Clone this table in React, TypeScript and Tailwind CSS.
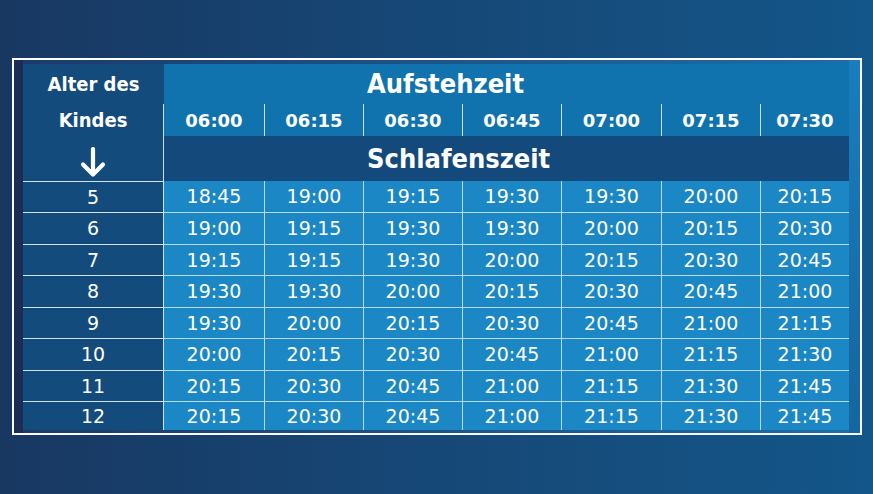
const times = ["06:00", "06:15", "06:30", "06:45", "07:00", "07:15", "07:30"];

const rows: { age: string; values: string[] }[] = [
  { age: "5", values: ["18:45", "19:00", "19:15", "19:30", "19:30", "20:00", "20:15"] },
  { age: "6", values: ["19:00", "19:15", "19:30", "19:30", "20:00", "20:15", "20:30"] },
  { age: "7", values: ["19:15", "19:15", "19:30", "20:00", "20:15", "20:30", "20:45"] },
  { age: "8", values: ["19:30", "19:30", "20:00", "20:15", "20:30", "20:45", "21:00"] },
  { age: "9", values: ["19:30", "20:00", "20:15", "20:30", "20:45", "21:00", "21:15"] },
  { age: "10", values: ["20:00", "20:15", "20:30", "20:45", "21:00", "21:15", "21:30"] },
  { age: "11", values: ["20:15", "20:30", "20:45", "21:00", "21:15", "21:30", "21:45"] },
  { age: "12", values: ["20:15", "20:30", "20:45", "21:00", "21:15", "21:30", "21:45"] },
];

function ArrowDown() {
  return (
    <svg width="26" height="31" viewBox="0 0 26 31" fill="none">
      <path d="M13 2 V27" stroke="white" strokeWidth="4.2" strokeLinecap="round" />
      <path d="M3 17.5 L13 27.5 L23 17.5" stroke="white" strokeWidth="4.2" strokeLinecap="round" strokeLinejoin="round" />
    </svg>
  );
}

export default function App() {
  const cond = "font-['DejaVu_Sans_Condensed','DejaVu_Sans',sans-serif] font-bold text-white";
  const bold = "font-['DejaVu_Sans',sans-serif] font-bold text-white";
  const data = "font-['DejaVu_Sans',sans-serif] text-[19px] text-white";

  return (
    <div className="w-[873px] h-[494px] bg-gradient-to-r from-[#183862] via-[#164877] to-[#135689] pt-[58px] pl-[12px]">
      <div className="w-[850px] h-[377px] border-2 border-white flex">
        <div className="w-[9px] bg-[#1b2d52]" />

        <div className="w-[826px] flex flex-col pt-[4px] pb-[3px] bg-gradient-to-r from-[#1b3c68] to-[#1a6ea9]">
          <div className="grid grid-cols-[141px_100px_99px_99px_99px_100px_99px_89px] grid-rows-[40px_32px_45px_31px_32px_31px_32px_31px_32px_31px_29px]">
            {/* row 1 */}
            <div className={`${cond} text-[20px] bg-[#144b7d] flex items-center justify-center`}>Alter des</div>
            <div className={`${cond} text-[27px] col-span-7 bg-[#1173ad] flex items-center pl-[203px] pt-[1px]`}>
              Aufstehzeit
            </div>

            {/* row 2 */}
            <div className={`${cond} text-[20px] bg-[#144b7d] border-r border-[#cfe1ee] flex items-center justify-center`}>
              Kindes
            </div>
            {times.map((t, i) => (
              <div
                key={t}
                className={`${bold} text-[18px] bg-[#1173ad] flex items-center justify-center ${
                  i > 0 ? "border-l border-[#cfe1ee]" : ""
                }`}
              >
                {t}
              </div>
            ))}

            {/* row 3 */}
            <div className="bg-[#144b7d] border-r border-[#cfe1ee] flex items-center justify-center pt-[7px]">
              <ArrowDown />
            </div>
            <div className={`${cond} text-[27px] col-span-7 bg-[#134a7b] flex items-center pl-[203px] pt-[1px]`}>
              Schlafenszeit
            </div>

            {/* data */}
            {rows.map((r, ri) => (
              <div key={r.age} className="contents">
                <div className={`${data} bg-[#144b7d] border-t border-r border-[#d3e1ec] flex items-center justify-center`}>
                  {r.age}
                </div>
                {r.values.map((v, i) => (
                  <div
                    key={i}
                    className={`${data} bg-[#1b87c5] border-[#b7dbf1] flex items-center justify-center ${
                      ri > 0 ? "border-t" : ""
                    } ${i > 0 ? "border-l" : ""}`}
                  >
                    {v}
                  </div>
                ))}
              </div>
            ))}
          </div>
        </div>

        <div className="w-[11px] bg-gradient-to-b from-[#1a7dbd] to-[#1566a0]" />
      </div>
    </div>
  );
}
